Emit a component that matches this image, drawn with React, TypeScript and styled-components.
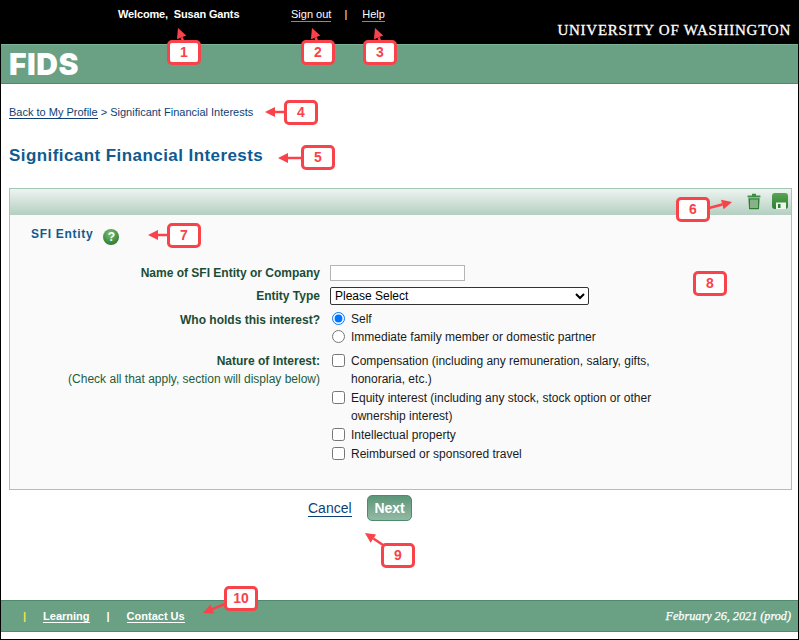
import React from "react";
import styled, { createGlobalStyle } from "styled-components";

const Global = createGlobalStyle`
  html, body { margin: 0; padding: 0; background: #fff; }
  body { font-family: "Liberation Sans", Arial, sans-serif; font-size: 12px; }
`;

const Page = styled.div`
  position: relative;
  box-sizing: border-box;
  width: 799px;
  height: 640px;
  display: flex;
  flex-direction: column;
  border-left: 1px solid #000;
  border-right: 1px solid #000;
  border-bottom: 1px solid #000;
  overflow: hidden;
`;

const TopBar = styled.header`
  background: #000;
  height: 44px;
  flex: none;
  box-sizing: border-box;
  display: flex;
  justify-content: space-between;
  color: #fff;
`;

const TopNav = styled.nav`
  display: flex;
  align-items: baseline;
  padding: 8px 0 0 117px;
  font-size: 11px;
  font-weight: bold;
`;

const Welcome = styled.span`
  width: 173px;
  white-space: pre;
  letter-spacing: -0.15px;
`;

const TopLink = styled.a`
  color: #fff;
  font-weight: normal;
  text-decoration: none;
  border-bottom: 1px solid #8a8a8a;
  line-height: 11px;
  padding-bottom: 1px;
`;

const TopSep = styled.span`
  font-weight: normal;
  margin: 0 15px 0 13px;
`;

const Univ = styled.div`
  font-family: "Liberation Serif", serif;
  font-size: 15px;
  letter-spacing: 0.75px;
  padding: 21px 7px 0 0;
  line-height: 18px;
  -webkit-text-stroke: 0.3px #fff;
`;

const Band = styled.div`
  height: 40px;
  flex: none;
  box-sizing: border-box;
  background: #6aa184;
  border-top: 1px solid #7fb398;
  border-bottom: 1px solid #4f8a6c;
  display: flex;
  align-items: center;
  padding-left: 8px;
`;

const Logo = styled.div`
  font-family: Inter, "Open Sans", sans-serif;
  font-weight: 900;
  font-size: 30px;
  line-height: 38px;
  letter-spacing: 0.5px;
  color: #fff;
`;

const Main = styled.main`
  flex: 1;
  padding: 21px 6px 0 8px;
  display: flex;
  flex-direction: column;
  min-height: 0;
`;

const Crumbs = styled.div`
  font-size: 11px;
  line-height: 14px;
  color: #0d3f73;
`;

const BackLink = styled.a`
  color: #0d3f73;
  text-decoration: none;
  border-bottom: 1px solid #0d3f73;
`;

const Title = styled.h1`
  margin: 25px 0 20px;
  font-size: 17px;
  line-height: 24px;
  letter-spacing: 0.43px;
  font-weight: bold;
  color: #0f5a8f;
`;

const Panel = styled.section`
  box-sizing: border-box;
  height: 302px;
  border: 1px solid #a4c4b4;
  background: #fafafa;
`;

const PanelBar = styled.div`
  height: 26px;
  background: linear-gradient(#eef4f0, #b4cfc1);
  display: flex;
  justify-content: flex-end;
  align-items: flex-start;
  gap: 11px;
  padding: 4px 3px 0 0;
  box-sizing: border-box;
`;

const SectionHead = styled.div`
  display: flex;
  align-items: center;
  gap: 10px;
  padding: 8px 0 0 21px;
  height: 22px;
`;

const SectionTitle = styled.h2`
  margin: 0;
  font-size: 12px;
  line-height: 18px;
  letter-spacing: 0.7px;
  font-weight: bold;
  color: #0f5a8f;
`;

const HelpDot = styled.span`
  width: 16px;
  height: 16px;
  margin-top: 5px;
  border-radius: 50%;
  background: radial-gradient(circle at 45% 30%, #7fbf70, #2f7f35 75%);
  color: #fff;
  font-size: 12px;
  font-weight: bold;
  line-height: 16px;
  text-align: center;
`;

const Form = styled.div`
  display: grid;
  grid-template-columns: 310px 340px;
  column-gap: 10px;
  padding-top: 19px;
  align-items: start;
`;

const Label = styled.div<{ $top?: number }>`
  text-align: right;
  font-weight: bold;
  color: #1b4d36;
  line-height: 18px;
  padding-top: ${(p) => p.$top ?? 0}px;
`;

const Hint = styled.div`
  font-weight: normal;
  color: #1f5c3c;
`;

const Cell = styled.div<{ $top?: number }>`
  padding-top: ${(p) => p.$top ?? 0}px;
`;

const TextInput = styled.input`
  display: block;
  box-sizing: border-box;
  width: 135px;
  height: 16px;
  padding: 0 2px;
  border: 1px solid #b5b5b5;
  background: #fff;
`;

const Select = styled.select`
  display: block;
  box-sizing: border-box;
  width: 259px;
  height: 18px;
  font-family: "Liberation Sans", Arial, sans-serif;
  font-size: 12px;
  padding: 0;
  border: 1px solid #333;
  border-radius: 2px;
  background: #fff;
  color: #000;
`;

const Option = styled.label<{ $line: number }>`
  display: flex;
  align-items: flex-start;
  color: #1a1a1a;
  line-height: ${(p) => p.$line}px;
`;

const Check = styled.input`
  flex: none;
  width: 13px;
  height: 13px;
  margin: 2px 6px 0 2px;
`;

const Actions = styled.div`
  display: flex;
  align-items: center;
  padding: 5px 0 0 299px;
  gap: 15px;
`;

const CancelLink = styled.a`
  color: #0d3f73;
  font-size: 14px;
  line-height: 16px;
  text-decoration: none;
  border-bottom: 1px solid #0d3f73;
`;

const NextButton = styled.button`
  box-sizing: border-box;
  width: 45px;
  height: 26px;
  padding: 0 0 0 1px;
  border: 1px solid #4f8a6c;
  border-radius: 5px;
  background: linear-gradient(#5c9679, #93b9a4);
  color: #fff;
  font-family: "Liberation Sans", Arial, sans-serif;
  font-size: 14px;
  font-weight: bold;
`;

const Footer = styled.footer`
  height: 32px;
  flex: none;
  box-sizing: border-box;
  margin-bottom: 7px;
  background: #6aa184;
  border-top: 1px solid #4f8a6c;
  border-bottom: 1px solid #4f8a6c;
  display: flex;
  align-items: center;
  justify-content: space-between;
  padding: 0 7px 0 22px;
  color: #fff;
`;

const FooterNav = styled.nav`
  display: flex;
  align-items: center;
  font-size: 11px;
  font-weight: bold;
`;

const FootSep = styled.span<{ $color: string }>`
  color: ${(p) => p.$color};
  font-weight: bold;
  margin-right: 17px;
`;

const FootLink = styled.a`
  color: #fff;
  text-decoration: none;
  border-bottom: 1px solid #fff;
  line-height: 12px;
  margin-right: 17px;
`;

const DateStamp = styled.div`
  font-family: "Liberation Serif", serif;
  font-style: italic;
  font-size: 12.2px;
  -webkit-text-stroke: 0.25px #fff;
`;

const Overlay = styled.svg`
  position: absolute;
  left: -1px;
  top: 0;
  width: 799px;
  height: 640px;
  pointer-events: none;
`;

const Callout = styled.div<{ $x: number; $y: number }>`
  position: absolute;
  left: ${(p) => p.$x - 1}px;
  top: ${(p) => p.$y}px;
  box-sizing: border-box;
  width: 34px;
  height: 25px;
  border: 3px solid #f8434a;
  border-radius: 5px;
  background: #fff;
  color: #f8434a;
  font-size: 14px;
  font-weight: bold;
  line-height: 19px;
  text-align: center;
`;

const TrashIcon = () => (
  <svg width="14" height="17" viewBox="0 0 14 17">
    <path d="M5 .8h4v1.6h4.4v2H.6v-2H5z" fill="#3d8f3f" />
    <path d="M1.4 5.2h11.2l-.7 11H2.1z" fill="#2f7d33" />
    <path d="M4 6.5v8.5M6 6.5v8.5M8 6.5v8.5M10 6.5v8.5" stroke="#dcebd9" strokeWidth="1" />
  </svg>
);

const SaveIcon = () => (
  <svg width="16" height="16" viewBox="0 0 16 16">
    <defs>
      <linearGradient id="saveFill" x1="0" y1="0" x2="0" y2="1">
        <stop offset="0" stopColor="#58a552" />
        <stop offset="1" stopColor="#2f7d33" />
      </linearGradient>
    </defs>
    <rect x="0" y="0" width="16" height="16" rx="3" fill="url(#saveFill)" />
    <rect x="4" y="9.5" width="10" height="6.5" fill="#eef5ec" />
    <rect x="6" y="11" width="2.5" height="4" fill="#2f7d33" />
  </svg>
);

const callouts = [
  { n: 1, x: 167, y: 40 },
  { n: 2, x: 301, y: 40 },
  { n: 3, x: 363, y: 40 },
  { n: 4, x: 284, y: 100 },
  { n: 5, x: 301, y: 145 },
  { n: 6, x: 676, y: 197 },
  { n: 7, x: 167, y: 223 },
  { n: 8, x: 693, y: 271 },
  { n: 9, x: 381, y: 543 },
  { n: 10, x: 224, y: 586 },
];

const arrows = [
  [183, 41, 178, 28],
  [317, 41, 312, 28],
  [380, 41, 375, 28],
  [285, 112, 265, 112],
  [302, 158, 278, 158],
  [709, 208, 732, 202],
  [168, 235, 148, 235],
  [383, 545, 365, 533],
  [225, 604, 203, 613],
];

const Arrow = ({ c }: { c: number[] }) => {
  const [x1, y1, x2, y2] = c;
  const a = Math.atan2(y2 - y1, x2 - x1);
  const l = 10;
  const w = 5;
  const bx = x2 - l * Math.cos(a);
  const by = y2 - l * Math.sin(a);
  const px = -Math.sin(a) * w;
  const py = Math.cos(a) * w;
  return (
    <g>
      <line x1={x1} y1={y1} x2={bx} y2={by} stroke="#f8434a" strokeWidth="2.5" />
      <polygon
        points={`${x2},${y2} ${bx + px},${by + py} ${bx - px},${by - py}`}
        fill="#f8434a"
      />
    </g>
  );
};

export default function App() {
  return (
    <Page>
      <Global />
      <TopBar>
        <TopNav>
          <Welcome>Welcome,  Susan Gants</Welcome>
          <TopLink href="#">Sign out</TopLink>
          <TopSep>|</TopSep>
          <TopLink href="#">Help</TopLink>
        </TopNav>
        <Univ>UNIVERSITY OF WASHINGTON</Univ>
      </TopBar>
      <Band>
        <Logo>FIDS</Logo>
      </Band>
      <Main>
        <Crumbs>
          <BackLink href="#">Back to My Profile</BackLink> &gt; Significant Financial Interests
        </Crumbs>
        <Title>Significant Financial Interests</Title>
        <Panel>
          <PanelBar>
            <TrashIcon />
            <SaveIcon />
          </PanelBar>
          <SectionHead>
            <SectionTitle>SFI Entity</SectionTitle>
            <HelpDot>?</HelpDot>
          </SectionHead>
          <Form>
            <Label $top={0}>Name of SFI Entity or Company</Label>
            <Cell $top={1}>
              <TextInput />
            </Cell>
            <Label $top={5}>Entity Type</Label>
            <Cell $top={5}>
              <Select defaultValue="">
                <option value="">Please Select</option>
              </Select>
            </Cell>
            <Label $top={6}>Who holds this interest?</Label>
            <Cell $top={5}>
              <Option $line={18}>
                <Check type="radio" name="holder" defaultChecked />
                Self
              </Option>
              <Option $line={18}>
                <Check type="radio" name="holder" />
                Immediate family member or domestic partner
              </Option>
            </Cell>
            <Label $top={6}>
              Nature of Interest:
              <Hint>(Check all that apply, section will display below)</Hint>
            </Label>
            <Cell $top={5.6}>
              <Option $line={18.6}>
                <Check type="checkbox" />
                Compensation (including any remuneration, salary, gifts, honoraria, etc.)
              </Option>
              <Option $line={18.6}>
                <Check type="checkbox" />
                Equity interest (including any stock, stock option or other ownership interest)
              </Option>
              <Option $line={18.6}>
                <Check type="checkbox" />
                Intellectual property
              </Option>
              <Option $line={18.6}>
                <Check type="checkbox" />
                Reimbursed or sponsored travel
              </Option>
            </Cell>
          </Form>
        </Panel>
        <Actions>
          <CancelLink href="#">Cancel</CancelLink>
          <NextButton>Next</NextButton>
        </Actions>
      </Main>
      <Footer>
        <FooterNav>
          <FootSep $color="#f2e24a">|</FootSep>
          <FootLink href="#">Learning</FootLink>
          <FootSep $color="#fff">|</FootSep>
          <FootLink href="#">Contact Us</FootLink>
        </FooterNav>
        <DateStamp>February 26, 2021 (prod)</DateStamp>
      </Footer>
      <Overlay viewBox="0 0 799 640">
        {arrows.map((c) => (
          <Arrow key={c.join()} c={c} />
        ))}
      </Overlay>
      {callouts.map((c) => (
        <Callout key={c.n} $x={c.x} $y={c.y}>
          {c.n}
        </Callout>
      ))}
    </Page>
  );
}
